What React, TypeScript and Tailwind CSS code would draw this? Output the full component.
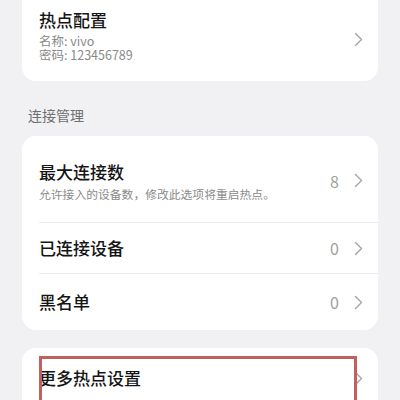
import React from 'react';

const Chevron: React.FC = () => (
  <svg width="9" height="15" viewBox="0 0 9 15" className="shrink-0">
    <path d="M1.5 1.5 L7.5 7.5 L1.5 13.5" fill="none" stroke="#a3a3a3" strokeWidth="1.4" strokeLinecap="round" strokeLinejoin="round" />
  </svg>
);

const font = { fontFamily: '"Noto Sans CJK SC", "Noto Sans", sans-serif' };

export default function App() {
  return (
    <div className="w-[400px] h-[400px] overflow-hidden bg-[#f1f1f3]" style={font}>
      {/* hotspot config card (top clipped) */}
      <div className="mx-[22px] bg-white rounded-b-[14px] pl-[17px] pr-[15px] pt-[9px] pb-[19px] flex items-center">
        <div className="flex-1">
          <div className="text-[17px] leading-[22px] font-medium text-[#151515]">热点配置</div>
          <div className="mt-[3px] text-[12.5px] leading-[14px] text-[#8a8a8a]">名称: vivo</div>
          <div className="text-[12.5px] leading-[14px] text-[#8a8a8a]">密码: 123456789</div>
        </div>
        <div className="mt-[8px]">
          <Chevron />
        </div>
      </div>

      <div className="h-[55px] pl-[28px] flex items-center text-[14px] text-[#6f6f6f] pt-[14px]">连接管理</div>

      {/* connection management */}
      <div className="mx-[22px] bg-white rounded-[14px]">
        <div className="h-[86px] pl-[17px] pr-[15px] flex items-center pt-[3px]">
          <div className="flex-1">
            <div className="text-[17px] leading-[22px] font-medium text-[#151515]">最大连接数</div>
            <div className="mt-[4px] text-[11.8px] leading-[14px] text-[#8a8a8a]">允许接入的设备数，修改此选项将重启热点。</div>
          </div>
          <span className="text-[16px] text-[#a0a0a0] mr-[15px]">8</span>
          <Chevron />
        </div>
        <div className="ml-[17px] border-t border-[#ececec]" />
        <div className="h-[50px] pl-[17px] pr-[15px] flex items-center">
          <div className="flex-1 text-[17px] leading-[22px] font-medium text-[#151515]">已连接设备</div>
          <span className="text-[16px] text-[#a0a0a0] mr-[15px]">0</span>
          <Chevron />
        </div>
        <div className="ml-[17px] border-t border-[#ececec]" />
        <div className="h-[56px] pl-[17px] pr-[15px] flex items-center">
          <div className="flex-1 text-[17px] leading-[22px] font-medium text-[#151515]">黑名单</div>
          <span className="text-[16px] text-[#a0a0a0] mr-[15px]">0</span>
          <Chevron />
        </div>
      </div>

      {/* more settings */}
      <div className="relative mx-[22px] mt-[18px] bg-white rounded-[14px] h-[80px]">
        <div className="h-[60px] pl-[17px] pr-[15px] flex items-center">
          <div className="flex-1 text-[17px] leading-[22px] font-medium text-[#151515]">更多热点设置</div>
          <Chevron />
        </div>
        <div className="absolute left-[17px] top-[8px] w-[318px] h-[80px] border-[3px] border-[#c0605f]" />
      </div>
    </div>
  );
}
